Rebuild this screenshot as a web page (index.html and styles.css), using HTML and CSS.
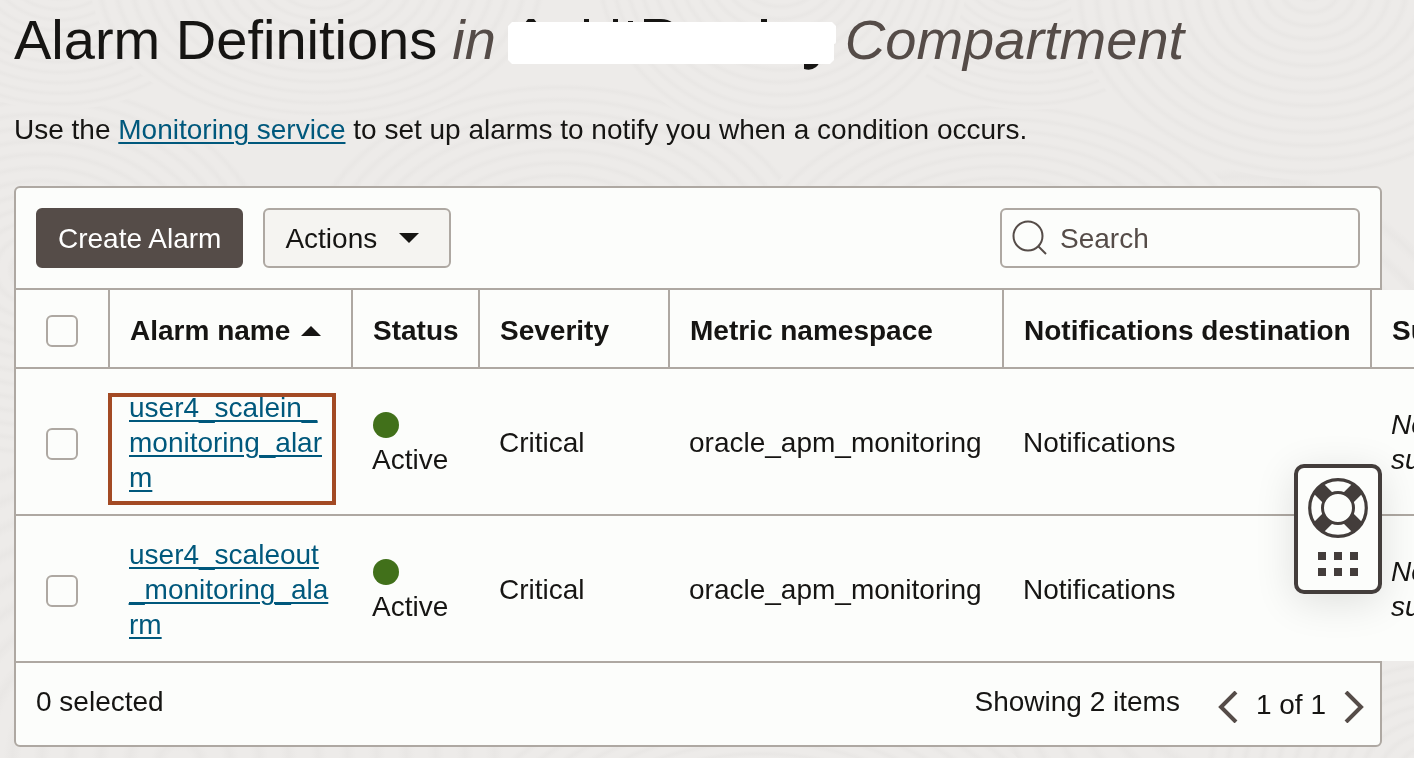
FILE: index.html
```html
<!DOCTYPE html>
<html lang="en">
<head>
<meta charset="utf-8">
<title>Alarm Definitions</title>
<link rel="stylesheet" href="styles.css">
</head>
<body>
<svg class="backdrop" viewBox="0 0 1414 758" preserveAspectRatio="xMidYMid slice" aria-hidden="true">
  <defs>
    <radialGradient id="grain" gradientUnits="userSpaceOnUse" cx="0" cy="0" spreadMethod="repeat" r="0.07">
      <stop offset="0" stop-color="#edebe9"/>
      <stop offset="0.4" stop-color="#edebe9"/>
      <stop offset="0.7" stop-color="#e9e7e5"/>
      <stop offset="1" stop-color="#edebe9"/>
    </radialGradient>
    <circle id="ring" r="1" fill="url(#grain)"/>
  </defs>
  <rect width="1414" height="758" fill="#edebe9"/>
  <use href="#ring" transform="translate(180 760) scale(420 330)"/>
  <use href="#ring" transform="translate(1240 560) scale(300 400)"/>
  <use href="#ring" transform="translate(560 260) scale(260 180)"/>
  <use href="#ring" transform="translate(1000 270) scale(260 170)"/>
  <use href="#ring" transform="translate(40 270) scale(240 190)"/>
  <use href="#ring" transform="translate(1030 -40) scale(180 150)"/>
  <use href="#ring" transform="translate(60 -40) scale(180 150)"/>
  <use href="#ring" transform="translate(320 -20) scale(230 150)"/>
  <use href="#ring" transform="translate(780 -40) scale(190 180)"/>
  <use href="#ring" transform="translate(1310 -10) scale(240 190)"/>
  <use href="#ring" transform="translate(760 840) scale(300 160)"/>
  <use href="#ring" transform="translate(1440 780) scale(240 190)"/>
</svg>

<main class="page">
  <h1 class="title">
    <span>Alarm Definitions</span>
    <em>in</em>
    <svg class="redaction" viewBox="0 0 328 60" role="img" aria-label="Redacted">
      <g fill="#161513">
        <path d="M17 13l3-4h6l3 4z"/>
        <rect x="76" y="9" width="5" height="4"/>
        <rect x="105" y="9" width="5" height="4"/>
        <rect x="120" y="11" width="5" height="2"/>
        <path d="M136 9h17q7 0 12 4H136z"/>
        <rect x="253" y="9" width="6" height="4"/>
        <path d="M296 53v6q12 3 16-8z"/>
      </g>
      <path fill="#fff" d="M4 12H324l4 4V32q0 2-2 2V50l-4 4H4l-4-4V16z"/>
    </svg>
    <em>Compartment</em>
  </h1>
  <p class="intro">Use the <a href="#monitoring">Monitoring service</a> to set up alarms to notify you when a condition occurs.</p>

  <section class="list">
    <div class="toolbar">
      <button class="btn btn-primary" type="button">Create Alarm</button>
      <button class="btn btn-menu" type="button">Actions
        <svg width="20" height="10" viewBox="0 0 20 10" aria-hidden="true"><path d="M0 0h20L10 10z" fill="#161513"/></svg>
      </button>
      <label class="search">
        <svg width="36" height="36" viewBox="0 0 36 36" fill="none" stroke="#554c48" stroke-width="2" aria-hidden="true"><circle cx="16" cy="16" r="14.5"/><path d="M26 26l8 8"/></svg>
        <input type="search" placeholder="Search" aria-label="Search">
      </label>
    </div>

    <div class="table-area">
      <table class="alarms">
        <colgroup>
          <col class="col-check"><col class="col-name"><col class="col-status"><col class="col-severity"><col class="col-namespace"><col class="col-destination"><col class="col-suppression">
        </colgroup>
        <thead>
          <tr>
            <th class="check"><input type="checkbox" aria-label="Select all alarms"></th>
            <th>Alarm name <svg width="20" height="14" viewBox="0 0 20 14" aria-hidden="true"><path d="M0 10h20L10 0z" fill="#161513"/></svg></th>
            <th>Status</th>
            <th>Severity</th>
            <th>Metric namespace</th>
            <th>Notifications destination</th>
            <th>Suppression</th>
          </tr>
        </thead>
        <tbody>
          <tr>
            <td class="check"><input type="checkbox" aria-label="Select user4_scalein_monitoring_alarm"></td>
            <td class="name"><a href="#scalein">user4_scalein_<br>monitoring_alar<br>m</a><span class="highlight"></span></td>
            <td class="status"><span class="dot"></span>Active</td>
            <td>Critical</td>
            <td>oracle_apm_monitoring</td>
            <td>Notifications</td>
            <td class="none">No<br>suppression</td>
          </tr>
          <tr>
            <td class="check"><input type="checkbox" aria-label="Select user4_scaleout_monitoring_alarm"></td>
            <td class="name"><a href="#scaleout">user4_scaleout<br>_monitoring_ala<br>rm</a></td>
            <td class="status"><span class="dot"></span>Active</td>
            <td>Critical</td>
            <td>oracle_apm_monitoring</td>
            <td>Notifications</td>
            <td class="none">No<br>suppression</td>
          </tr>
        </tbody>
      </table>
    </div>

    <div class="footer">
      <span class="selected">0 selected</span>
      <span>Showing 2 items</span>
      <nav class="pager" aria-label="Pages">
        <button type="button" aria-label="Previous page"><svg width="20" height="32" viewBox="0 0 20 32" fill="none" stroke="#554c48" stroke-width="4" aria-hidden="true"><path d="M18 1L3 16l15 15"/></svg></button>
        <span>1 of 1</span>
        <button type="button" aria-label="Next page"><svg width="20" height="32" viewBox="0 0 20 32" fill="none" stroke="#554c48" stroke-width="4" aria-hidden="true"><path d="M2 1l15 15L2 31"/></svg></button>
      </nav>
    </div>
  </section>
</main>

<button class="help" type="button" aria-label="Help">
  <svg width="60" height="102" viewBox="0 0 60 102" aria-hidden="true">
    <g fill="none" stroke="#433d3b">
      <path stroke-width="14" d="M10 10l10 10M50 10L40 20M10 50l10-10M50 50L40 40"/>
      <circle cx="30" cy="30" r="15.5" stroke-width="3" fill="#fcfdfb"/>
      <circle cx="30" cy="30" r="28.3" stroke-width="3.2"/>
    </g>
    <g fill="#433d3b">
      <rect x="10" y="74" width="8" height="8"/><rect x="26" y="74" width="8" height="8"/><rect x="42" y="74" width="8" height="8"/>
      <rect x="10" y="90" width="8" height="8"/><rect x="26" y="90" width="8" height="8"/><rect x="42" y="90" width="8" height="8"/>
    </g>
  </svg>
</button>
</body>
</html>
```
FILE: styles.css
```css
:root {
  --ink: #161513;
  --muted: #554c48;
  --line: #aea8a2;
  --panel: #fcfdfb;
  --link: #00587c;
}

* { box-sizing: border-box; }

body {
  margin: 0;
  min-height: 100vh;
  background: #edebe9;
  color: var(--ink);
  font: 28px/35px "Liberation Sans", Arial, sans-serif;
}

button, input { font: inherit; color: inherit; }

a {
  color: var(--link);
  text-decoration-thickness: 2px;
  text-underline-offset: 3px;
}

.backdrop {
  position: fixed;
  inset: 0;
  width: 100%;
  height: 100%;
  z-index: -1;
}

.page {
  padding: 6px 32px 10px 14px;
  overflow-x: hidden;
}

.title {
  display: flex;
  align-items: center;
  margin: 0;
  font-size: 56px;
  line-height: 68px;
  font-weight: 400;
  white-space: nowrap;
}

.title em { margin-left: 15px; color: var(--muted); }
.redaction { width: 328px; height: 60px; margin-left: 12px; flex: none; }
.redaction + em { margin-left: 9px; }

.intro { margin: 38px 0 39px; }

.toolbar {
  display: flex;
  align-items: center;
  gap: 20px;
  padding: 20px;
  background: var(--panel);
  border: 2px solid var(--line);
  border-radius: 6px 6px 0 0;
}

.btn {
  height: 60px;
  padding: 0 20px;
  border: 2px solid var(--line);
  border-radius: 6px;
  background: #f5f4f1;
  white-space: nowrap;
}

.btn-primary {
  background: var(--muted);
  border-color: var(--muted);
  color: #fff;
}

.btn-menu {
  display: flex;
  align-items: center;
  gap: 22px;
  padding-right: 30px;
}

.search {
  display: flex;
  align-items: center;
  gap: 12px;
  width: 360px;
  height: 60px;
  margin-left: auto;
  padding: 0 10px;
  border: 2px solid var(--line);
  border-radius: 6px;
}

.search svg { flex: none; }

.search input {
  flex: 1;
  min-width: 0;
  padding: 0;
  border: 0;
  outline: 0;
  background: none;
  appearance: none;
}

.search input::placeholder { color: var(--muted); opacity: 1; }

.table-area { border-left: 2px solid var(--line); }

.alarms {
  width: 1600px;
  table-layout: fixed;
  border-collapse: separate;
  border-spacing: 0;
  background: var(--panel);
}

.col-check { width: 94px; }
.col-name { width: 243px; }
.col-status { width: 127px; }
.col-severity { width: 190px; }
.col-namespace { width: 334px; }
.col-destination { width: 368px; }

.alarms th, .alarms td {
  padding: 21px 0 19px 19px;
  text-align: left;
  vertical-align: middle;
  white-space: nowrap;
}

.alarms th {
  padding: 23px 0 19px 20px;
  border-right: 2px solid var(--line);
  border-bottom: 2px solid var(--line);
}

.alarms th svg { margin-left: 3px; }
.alarms tr:not(:last-child) td { border-bottom: 2px solid var(--line); }
.alarms .check { padding-left: 30px; }
.alarms td.check { padding-top: 23px; }
.alarms .status, .alarms .none { padding-top: 20px; padding-bottom: 20px; }

.alarms input {
  display: block;
  width: 32px;
  height: 32px;
  margin: 0;
  border: 2px solid var(--line);
  border-radius: 6px;
  background: var(--panel);
  appearance: none;
}

.name { position: relative; }

.highlight {
  position: absolute;
  top: 24px;
  left: -2px;
  width: 228px;
  height: 112px;
  border: 4px solid #a34a24;
  pointer-events: none;
}

.dot {
  display: block;
  width: 26px;
  height: 26px;
  margin: 5px 0 4px 1px;
  border-radius: 50%;
  background: #41701a;
}

.none { font-style: italic; }

.footer {
  display: flex;
  align-items: flex-start;
  padding: 21px 16px 22px 20px;
  background: var(--panel);
  border: 2px solid var(--line);
  border-radius: 0 0 6px 6px;
}

.selected { margin-right: auto; }

.pager {
  display: flex;
  align-items: flex-start;
  gap: 18px;
  margin-left: 38px;
  padding-top: 3px;
}

.pager button {
  display: flex;
  padding: 4px 0 0;
  border: 0;
  background: none;
}

.help {
  position: fixed;
  top: 464px;
  right: 32px;
  width: 88px;
  height: 130px;
  padding: 10px;
  border: 4px solid #433d3b;
  border-radius: 10px;
  background: var(--panel);
  box-shadow: 0 8px 40px rgba(0, 0, 0, 0.12);
}

.help svg { display: block; }
```
